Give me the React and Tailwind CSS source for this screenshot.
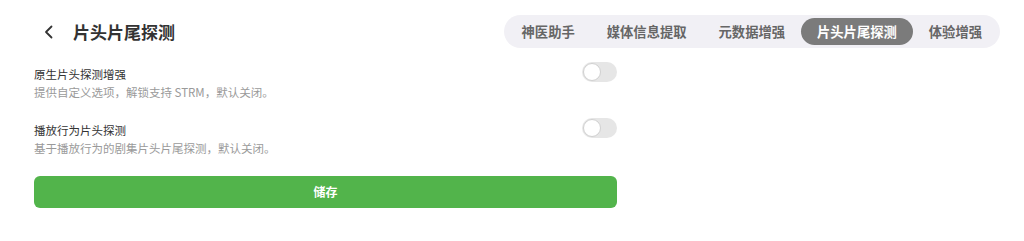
import { useState } from "react";

const tabs = ["神医助手", "媒体信息提取", "元数据增强", "片头片尾探测", "体验增强"];

const options = [
  {
    key: "native",
    title: "原生片头探测增强",
    desc: "提供自定义选项，解锁支持 STRM，默认关闭。",
  },
  {
    key: "playback",
    title: "播放行为片头探测",
    desc: "基于播放行为的剧集片头片尾探测，默认关闭。",
  },
];

function Toggle({ on, onChange }) {
  return (
    <button
      type="button"
      onClick={onChange}
      className={`relative w-[35px] h-[20px] rounded-full shrink-0 ${
        on ? "bg-[#52b44b]" : "bg-[#e6e6e6]"
      }`}
    >
      <span
        className={`absolute top-[1px] w-[18px] h-[18px] rounded-full bg-white border border-[#d0d0d0] ${
          on ? "left-[16px]" : "left-[1px]"
        }`}
      />
    </button>
  );
}

export default function App() {
  const [active, setActive] = useState("片头片尾探测");
  const [form, setForm] = useState({ native: false, playback: false });

  return (
    <div
      className="w-[1024px] h-[241px] bg-white text-[#333]"
      style={{ fontFamily: '"Noto Sans CJK SC", "Noto Sans", sans-serif' }}
    >
      {/* HEADER */}
      <div className="flex items-center justify-between pt-[15px] pl-[42px] pr-[24px]">
        <div className="flex items-center gap-[17px]">
          <svg width="14" height="14" viewBox="0 0 14 14" fill="none">
            <path
              d="M9.5 1.5 L4 7 L9.5 12.5"
              stroke="#333"
              strokeWidth="1.8"
              strokeLinecap="round"
              strokeLinejoin="round"
            />
          </svg>
          <h1 className="text-[17px] font-bold leading-none">片头片尾探测</h1>
        </div>

        <div className="flex items-center h-[33px] px-[2px] rounded-full bg-[#f1f0f5]">
          {tabs.map((t) => (
            <button
              key={t}
              onClick={() => setActive(t)}
              className={`h-[27px] px-[16px] rounded-full text-[13.3px] font-bold leading-none ${
                active === t ? "bg-[#7b7b7b] text-white" : "text-[#666]"
              }`}
            >
              {t}
            </button>
          ))}
        </div>
      </div>

      {/* OPTIONS */}
      <div className="w-[617px] pl-[34px] mt-[14px] flex flex-col">
        {options.map((o, i) => (
          <div
            key={o.key}
            className={`flex justify-between items-start ${i > 0 ? "mt-[18px]" : ""}`}
          >
            <div className="pt-[4px]">
              <div className="text-[11.5px] leading-[16px] text-[#333]">{o.title}</div>
              <div className="mt-[3px] text-[11.5px] leading-[15px] text-[#9a9a9a]">{o.desc}</div>
            </div>
            <Toggle
              on={form[o.key]}
              onChange={() => setForm({ ...form, [o.key]: !form[o.key] })}
            />
          </div>
        ))}

        <button className="mt-[20px] h-[32px] w-full rounded-[6px] bg-[#52b44b] text-white text-[12px] font-bold">
          储存
        </button>
      </div>
    </div>
  );
}
